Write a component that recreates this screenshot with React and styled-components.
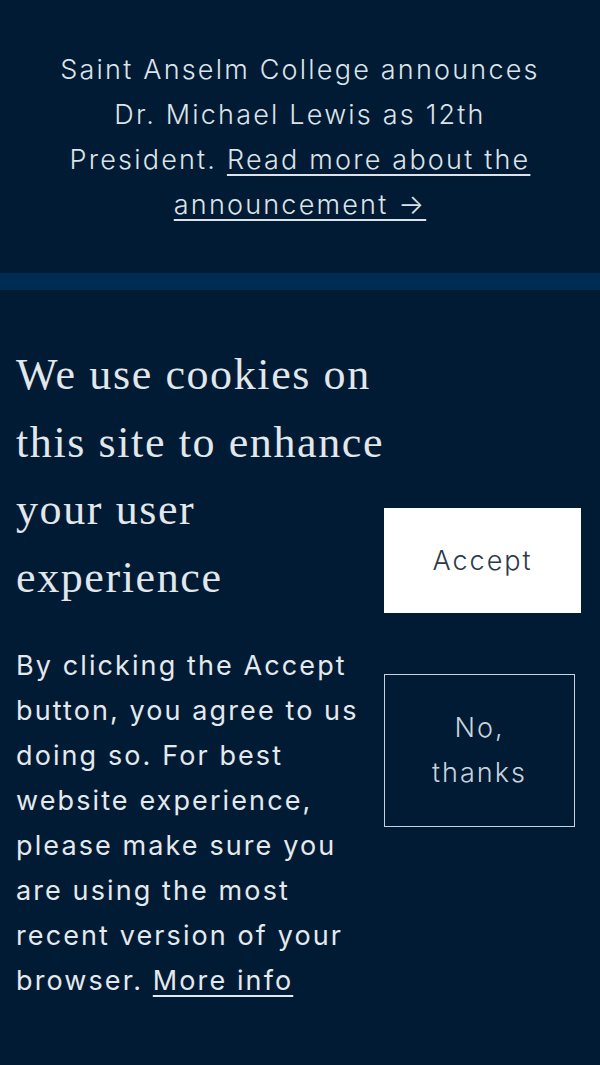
import styled, { createGlobalStyle } from 'styled-components';

const GlobalStyle = createGlobalStyle`
    html, body {
        margin: 0;
        padding: 0;
        background: #001b33;
    }
    * {
        box-sizing: border-box;
    }
`

const Page = styled.div`
    min-height: 1065px;
    background: #001b33;
    font-family: Inter, "Noto Sans", sans-serif;
`

const Announcement = styled.div`
    padding: 47px 20px 46px;
    text-align: center;
    color: #dde3ea;
    font-size: 27px;
    font-weight: 300;
    letter-spacing: 2.2px;
    line-height: 45px;
`

const Link = styled.a`
    color: inherit;
    text-decoration: underline;
    text-underline-offset: 5px;
    text-decoration-thickness: 2px;
`

const Stripe = styled.div`
    height: 17px;
    background: #002b52;
`

const CookieBanner = styled.div`
    display: grid;
    grid-template-columns: 368px 1fr;
    align-items: center;
    padding: 51px 19px 60px 16px;
`

const Copy = styled.div`
    display: flex;
    flex-direction: column;
    gap: 32px;
`

const Heading = styled.h2`
    margin: 0;
    font-family: "Liberation Serif", serif;
    font-weight: 400;
    font-size: 44px;
    letter-spacing: 1.6px;
    line-height: 67.5px;
    color: #e2e7ec;
`

const Body = styled.p`
    margin: 0;
    font-size: 27px;
    font-weight: 400;
    letter-spacing: 2.1px;
    line-height: 45px;
    color: #e4e9ee;
`

const Buttons = styled.div`
    display: flex;
    flex-direction: column;
    align-items: flex-start;
    gap: 61px;
    padding-bottom: 10px;
`

const Button = styled.button`
    width: ${p => p.$outline ? '191px' : '197px'};
    height: ${p => p.$outline ? '153px' : '105px'};
    padding: 0 30px;
    border: 1px solid ${p => p.$outline ? '#c5d3e0' : '#ffffff'};
    background: ${p => p.$outline ? 'transparent' : '#ffffff'};
    color: ${p => p.$outline ? '#c9d2dc' : '#2b3a4a'};
    font-family: Inter, "Noto Sans", sans-serif;
    font-size: 27px;
    font-weight: 300;
    letter-spacing: 2px;
    line-height: 45px;
    cursor: pointer;
`

export default function App() {
    return (
        <Page>
            <GlobalStyle />
            <Announcement>
                Saint Anselm College announces<br />
                Dr. Michael Lewis as 12th<br />
                President.{' '}
                <Link href="#">Read more about the<br />announcement →</Link>
            </Announcement>
            <Stripe />
            <CookieBanner>
                <Copy>
                    <Heading>We use cookies on this site to enhance your user experience</Heading>
                    <Body>
                        By clicking the Accept button, you agree to us doing so. For best website experience, please make sure you are using the most recent version of your browser.{' '}
                        <Link href="#">More info</Link>
                    </Body>
                </Copy>
                <Buttons>
                    <Button>Accept</Button>
                    <Button $outline>No, thanks</Button>
                </Buttons>
            </CookieBanner>
        </Page>
    )
}
